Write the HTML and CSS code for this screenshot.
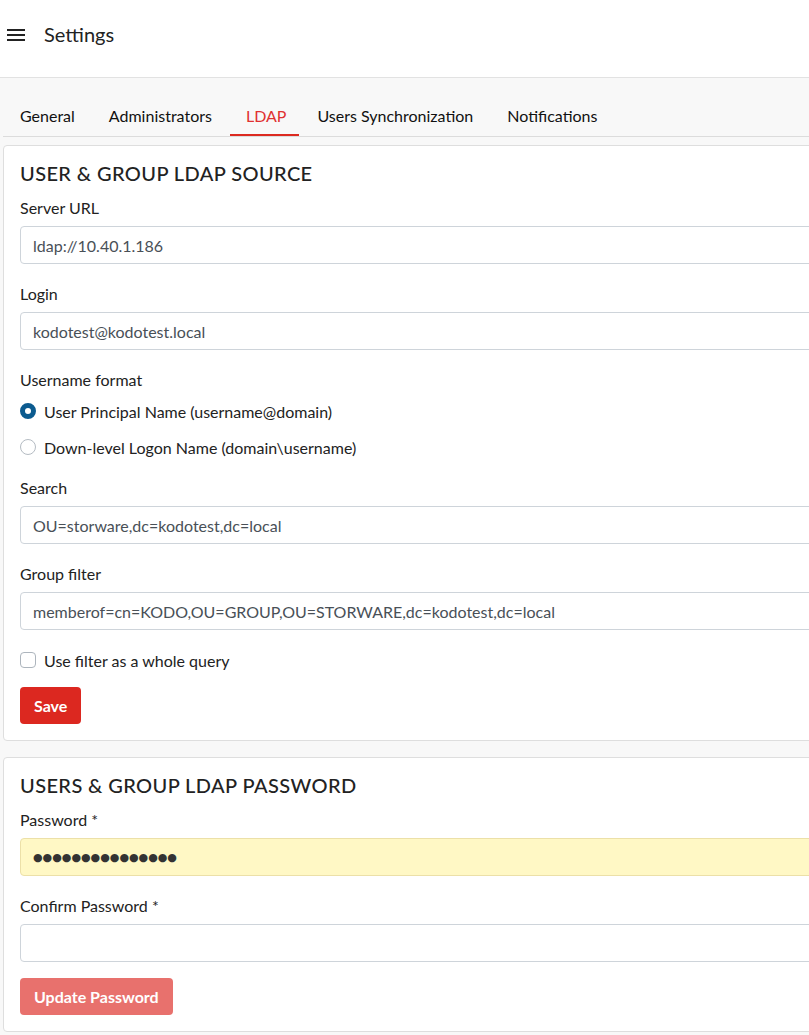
FILE: index.html
```html
<!DOCTYPE html>
<html>
<head>
<meta charset="utf-8">
<link rel="stylesheet" href="styles.css">
</head>
<body>
<div class="page">
  <header class="topbar">
    <svg class="menu-icon" width="18" height="14" viewBox="0 0 18 14"><rect x="0" y="1" width="18" height="2" fill="#222"/><rect x="0" y="6" width="18" height="2" fill="#222"/><rect x="0" y="11" width="18" height="2" fill="#222"/></svg>
    <span class="page-title">Settings</span>
  </header>
  <main class="content">
    <nav class="tabs">
      <a class="tab">General</a>
      <a class="tab">Administrators</a>
      <a class="tab active">LDAP</a>
      <a class="tab">Users Synchronization</a>
      <a class="tab">Notifications</a>
    </nav>
    <section class="card">
      <h2 class="card-title">USER &amp; GROUP LDAP SOURCE</h2>
      <div class="group">
        <label class="label">Server URL</label>
        <input class="input" type="text" value="ldap://10.40.1.186">
      </div>
      <div class="group">
        <label class="label">Login</label>
        <input class="input" type="text" value="kodotest@kodotest.local">
      </div>
      <div class="group radios">
        <label class="label">Username format</label>
        <div class="radio-row"><span class="radio checked"></span><span>User Principal Name (username@domain)</span></div>
        <div class="radio-row"><span class="radio"></span><span>Down-level Logon Name (domain\username)</span></div>
      </div>
      <div class="group">
        <label class="label">Search</label>
        <input class="input" type="text" value="OU=storware,dc=kodotest,dc=local">
      </div>
      <div class="group">
        <label class="label">Group filter</label>
        <input class="input" type="text" value="memberof=cn=KODO,OU=GROUP,OU=STORWARE,dc=kodotest,dc=local">
      </div>
      <div class="check-row"><span class="checkbox"></span><span>Use filter as a whole query</span></div>
      <button class="btn">Save</button>
    </section>
    <section class="card">
      <h2 class="card-title">USERS &amp; GROUP LDAP PASSWORD</h2>
      <div class="group">
        <label class="label">Password *</label>
        <div class="input autofill"><span class="dots">●●●●●●●●●●●●●●●</span></div>
      </div>
      <div class="group last">
        <label class="label">Confirm Password *</label>
        <input class="input" type="text" value="">
      </div>
      <button class="btn disabled">Update Password</button>
    </section>
  </main>
</div>
</body>
</html>
```
FILE: styles.css
```css
html, body {
  margin: 0;
  padding: 0;
  overflow: hidden;
  background: #f8f8f8;
}
body {
  font-family: Lato, "Open Sans", sans-serif;
  color: #212529;
  font-size: 16px;
}
.page {
  width: 1100px;
}
.topbar {
  background: #fff;
  border-bottom: 1px solid #e2e2e2;
  display: flex;
  align-items: center;
  box-sizing: border-box;
  height: 78px;
  padding-left: 7px;
}
.menu-icon {
  display: block;
  margin-right: 19px;
  margin-top: -8px;
}
.page-title {
  font-size: 20px;
  color: #222;
  margin-top: -9px;
}
.content {
  padding: 0 0 0 3px;
}
.tabs {
  display: flex;
  height: 58px;
  align-items: flex-end;
  border-bottom: 1px solid #dcdcdc;
  padding-left: 1px;
}
.tab {
  padding: 0 16px;
  height: 36px;
  line-height: 31px;
  font-size: 16px;
  color: #111;
  box-sizing: border-box;
  margin-right: 2px;
}
.tab.active {
  color: #e03131;
  border-bottom: 2px solid #dc2a20;
  padding: 0 13px 0 16px;
}
.card {
  background: #fff;
  border: 1px solid #dedede;
  border-radius: 4px;
  padding: 16px;
  margin-top: 8px;
  margin-bottom: 16px;
}
.card-title {
  margin: -1px 0 11px;
  font-size: 20px;
  font-weight: 500;
  line-height: 24px;
  letter-spacing: 0.4px;
  color: #222;
}
.group {
  margin-bottom: 18px;
}
.group.last {
  margin-bottom: 16px;
}
.label {
  display: block;
  line-height: 24px;
  margin-bottom: 6px;
  color: #222;
}
.input {
  display: block;
  box-sizing: border-box;
  width: 100%;
  height: 38px;
  border: 1px solid #ced4da;
  border-radius: 4px;
  padding: 0 12px;
  font-family: inherit;
  font-size: 16px;
  color: #495057;
  background: #fff;
  outline: none;
}
.input.autofill {
  background: #fff8c5;
  border-color: #ece0a8;
  display: flex;
  align-items: center;
}
.dots {
  color: #333;
  font-size: 11px;
  letter-spacing: 0px;
  font-family: "DejaVu Sans", sans-serif;
}
.radios {
  margin-bottom: 17px;
}
.radios .label {
  margin-bottom: 7px;
}
.radio-row, .check-row {
  display: flex;
  align-items: center;
  height: 24px;
  gap: 8px;
  color: #222;
}
.radio-row + .radio-row {
  margin-top: 12px;
}
.radio {
  width: 16px;
  height: 16px;
  border-radius: 50%;
  border: 1px solid #b5bcc3;
  box-sizing: border-box;
  flex: none;
  background: #fff;
}
.radio.checked {
  border: 5px solid #0c5b8f;
  background: #fff;
}
.check-row {
  margin-bottom: 15px;
}
.checkbox {
  width: 16px;
  height: 16px;
  border-radius: 4px;
  border: 1px solid #adb5bd;
  box-sizing: border-box;
  flex: none;
}
.btn {
  display: block;
  height: 37px;
  padding: 0 14px;
  border: none;
  border-radius: 4px;
  background: #dc2820;
  color: #fff;
  font-family: inherit;
  font-size: 16px;
  font-weight: 700;
}
.btn.disabled {
  background: #e8716d;
}
```
